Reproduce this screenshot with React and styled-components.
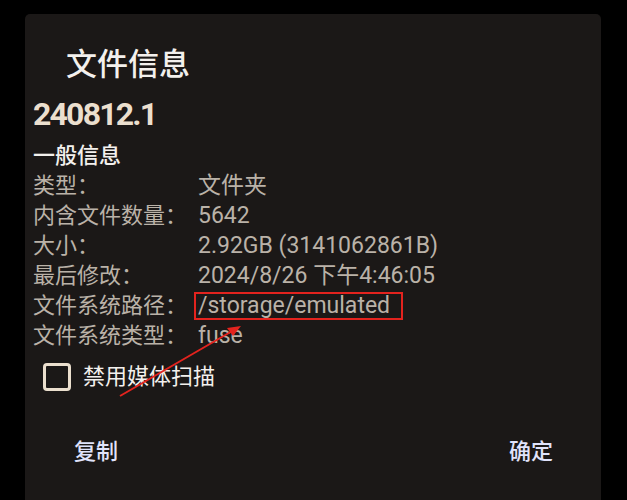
import React from "react";
import styled, { createGlobalStyle } from "styled-components";

const Global = createGlobalStyle`
  html, body { margin: 0; padding: 0; background: #000; }
  body { font-family: Roboto, "Noto Sans CJK SC", sans-serif; }
`;

const Screen = styled.div`
  width: 627px;
  height: 500px;
  box-sizing: border-box;
  padding: 14px 26px 0 25px;
  background: #000;
  overflow: hidden;
`;

const Dialog = styled.div`
  position: relative;
  height: 486px;
  box-sizing: border-box;
  background: #1b1817;
  border-radius: 5px 5px 0 0;
  padding: 33px 48px 0 8px;
  display: flex;
  flex-direction: column;
`;

const Title = styled.h1`
  margin: 0 0 0 33px;
  font-size: 31px;
  line-height: 36px;
  font-weight: 500;
  color: #f3f0ed;
`;

const FileName = styled.div`
  margin-top: 11px;
  font-size: 32px;
  line-height: 40px;
  font-weight: 700;
  letter-spacing: -1.8px;
  color: #ebdfce;
`;

const Section = styled.div`
  margin-top: 7px;
  font-size: 22px;
  line-height: 30px;
  font-weight: 500;
  color: #f3f0ed;
`;

const InfoGrid = styled.dl`
  margin: 0;
  display: grid;
  grid-template-columns: 165px 1fr;
  grid-auto-rows: 30px;
  font-size: 22px;
  line-height: 30px;
  color: #bab2a8;
`;

const Label = styled.dt`
  margin: 0;
  white-space: nowrap;
`;

const Value = styled.dd`
  margin: 0;
  white-space: nowrap;
  font-size: 23px;
`;

const Highlight = styled.span`
  display: inline-block;
  margin-left: -4px;
  padding: 0 11px 0 2px;
  line-height: 24px;
  border: 2px solid #e3231e;
`;

const CheckRow = styled.label`
  margin: 11px 0 0 10px;
  display: flex;
  align-items: center;
  gap: 12px;
  font-size: 22px;
  line-height: 30px;
  color: #f3f0ed;
`;

const Box = styled.span`
  width: 28px;
  height: 28px;
  box-sizing: border-box;
  border: 3px solid #ebdfce;
  border-radius: 4px;
`;

const Actions = styled.div`
  margin-top: 45px;
  padding-left: 41px;
  display: flex;
  justify-content: space-between;
`;

const ActionButton = styled.button`
  background: none;
  border: none;
  padding: 0;
  font-family: inherit;
  font-size: 22px;
  line-height: 30px;
  font-weight: 500;
  color: #e0e3fb;
`;

const Arrow = styled.svg`
  position: absolute;
  left: -25px;
  top: -14px;
  width: 627px;
  height: 500px;
  pointer-events: none;
`;

const rows = [
  ["类型：", "文件夹"],
  ["内含文件数量：", "5642"],
  ["大小：", "2.92GB (3141062861B)"],
  ["最后修改：", "2024/8/26 下午4:46:05"],
  ["文件系统路径：", "/storage/emulated", true],
  ["文件系统类型：", "fuse"],
];

export default function App() {
  return (
    <>
      <Global />
      <Screen>
        <Dialog>
          <Title>文件信息</Title>
          <FileName>240812.1</FileName>
          <Section>一般信息</Section>
          <InfoGrid>
            {rows.map(([k, v, hl]) => (
              <React.Fragment key={k}>
                <Label>{k}</Label>
                <Value>{hl ? <Highlight>{v}</Highlight> : v}</Value>
              </React.Fragment>
            ))}
          </InfoGrid>
          <CheckRow>
            <Box />
            禁用媒体扫描
          </CheckRow>
          <Actions>
            <ActionButton>复制</ActionButton>
            <ActionButton>确定</ActionButton>
          </Actions>
          <Arrow viewBox="0 0 627 500">
            <line x1="120" y1="396" x2="234" y2="330" stroke="#e3231e" strokeWidth="2" />
            <polygon points="241,326 227,328 233,336" fill="#e3231e" />
          </Arrow>
        </Dialog>
      </Screen>
    </>
  );
}
